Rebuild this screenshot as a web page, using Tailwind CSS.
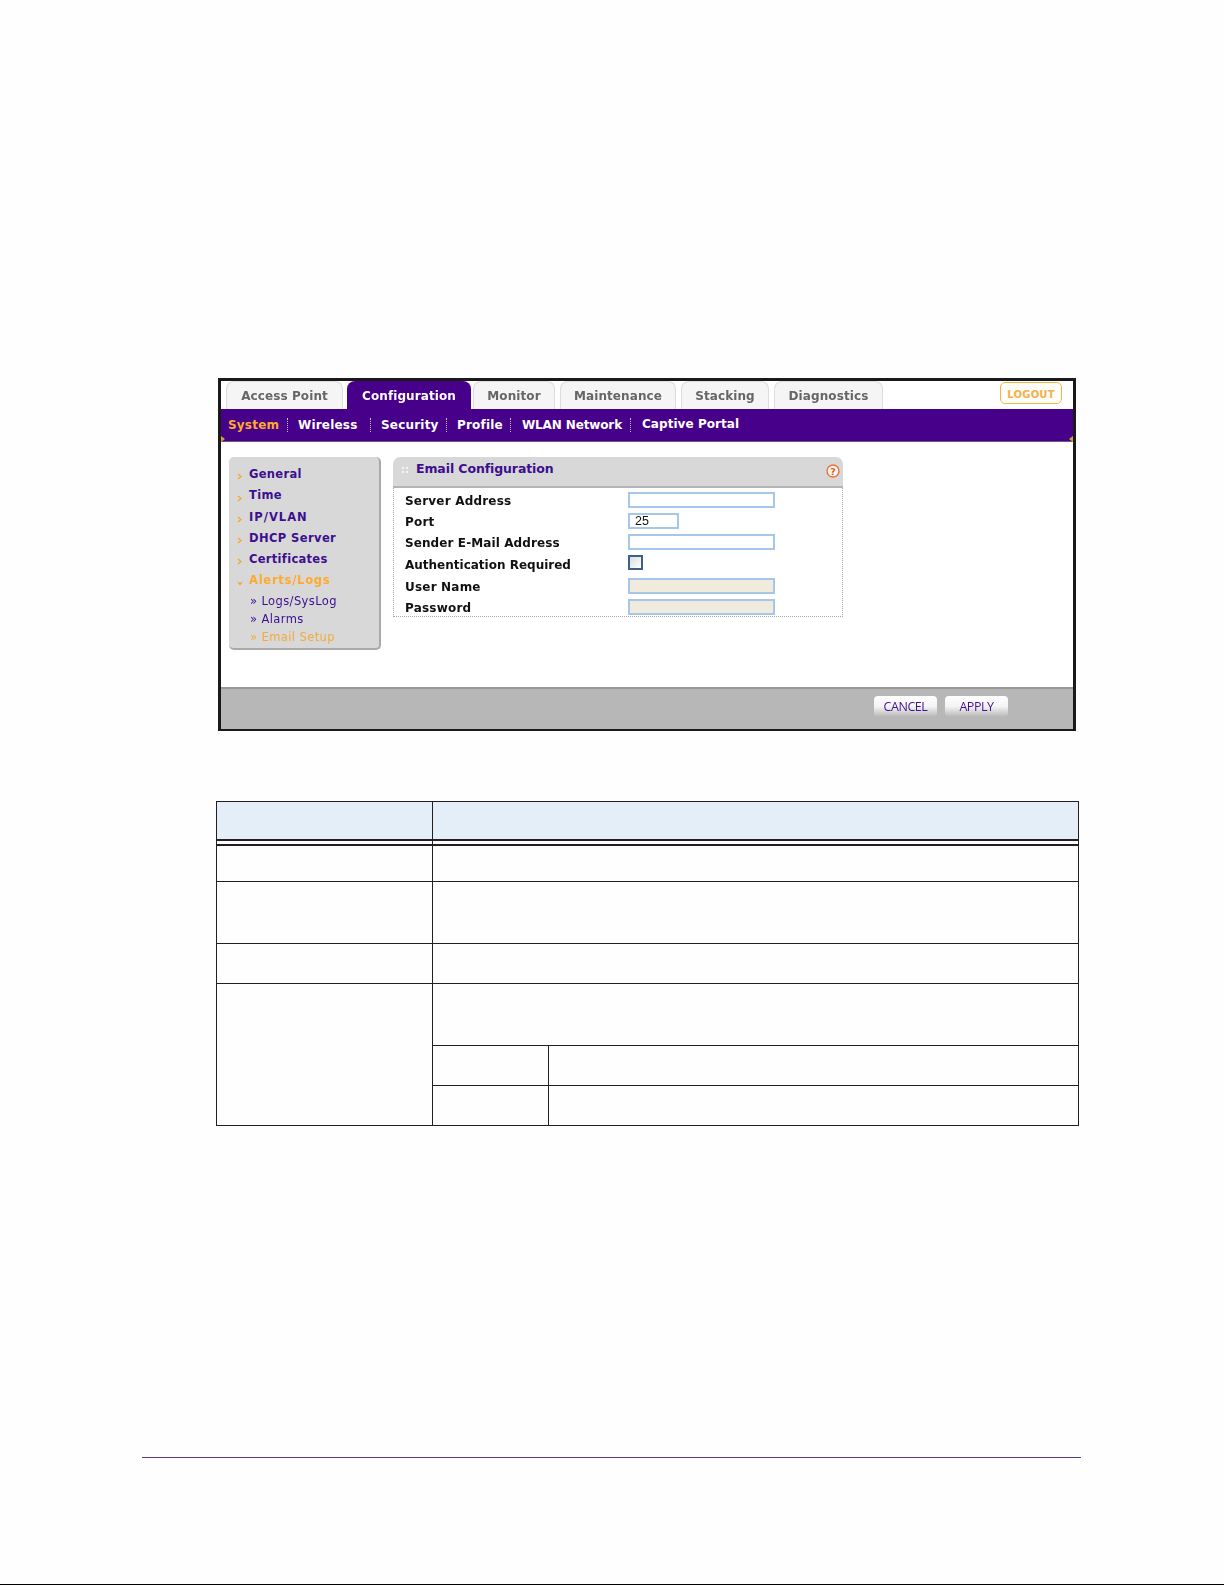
<!DOCTYPE html>
<html lang="en">
<head>
<meta charset="utf-8">
<title>Email Configuration</title>
<script src="https://cdn.jsdelivr.net/npm/@tailwindcss/browser@4"></script>
</head>
<body class="bg-[#fefefe] font-['DejaVu_Sans',sans-serif]">
<div class="h-[1585px] w-[1225px] overflow-hidden flex flex-col">
  <!-- Screenshot frame -->
  <div class="mt-[378px] ml-[218px] w-[858px] h-[353px] border-x-[3px] border-t-[3px] border-b-[2px] border-[#1a1a1a] bg-white shrink-0">
  <div class="h-full flex flex-col blur-[0.35px]">
    <div class="h-[28px] flex items-end pl-[5px] relative text-[12px] font-bold tracking-[0.1px] text-[#666]">
      <div class="w-[117px] h-[28px] pt-[1px] flex items-center justify-center rounded-t-[8px] border border-b-0 border-[#ddd] bg-[#f5f5f5]">Access Point</div>
      <div class="ml-[4px] w-[124px] h-[28px] pt-[2px] flex items-center justify-center rounded-t-[8px] bg-[#47008a] text-white">Configuration</div>
      <div class="ml-[2px] w-[82px] h-[28px] pt-[1px] flex items-center justify-center rounded-t-[8px] border border-b-0 border-[#ddd] bg-[#f5f5f5]">Monitor</div>
      <div class="ml-[5px] w-[116px] h-[28px] pt-[1px] flex items-center justify-center rounded-t-[8px] border border-b-0 border-[#ddd] bg-[#f5f5f5]">Maintenance</div>
      <div class="ml-[5px] w-[88px] h-[28px] pt-[1px] flex items-center justify-center rounded-t-[8px] border border-b-0 border-[#ddd] bg-[#f5f5f5]">Stacking</div>
      <div class="ml-[5px] w-[109px] h-[28px] pt-[1px] flex items-center justify-center rounded-t-[8px] border border-b-0 border-[#ddd] bg-[#f5f5f5]">Diagnostics</div>
      <div class="absolute left-[779px] top-[1px] w-[62px] h-[22px] pt-[2px] flex items-center justify-center rounded-[5px] border border-[#f5b547] bg-[#fffdf8] text-[10px] text-[#f2b04a] tracking-[0.2px]">LOGOUT</div>
    </div>
    <div class="h-[33px] bg-[#47008a] flex items-center pl-[7px] relative text-[12px] font-bold tracking-[0.2px] text-white border-b border-[#6b5a80]">
      <div class="w-[60px] h-[14px] flex items-center border-r border-dotted border-[#cbb8e0] text-[#ffa92e]">System</div>
      <div class="ml-[10px] w-[73px] h-[14px] flex items-center border-r border-dotted border-[#cbb8e0]">Wireless</div>
      <div class="ml-[10px] w-[66px] h-[14px] flex items-center border-r border-dotted border-[#cbb8e0]">Security</div>
      <div class="ml-[10px] w-[54px] h-[14px] flex items-center border-r border-dotted border-[#cbb8e0]">Profile</div>
      <div class="ml-[11px] w-[109px] h-[14px] flex items-center border-r border-dotted border-[#cbb8e0] tracking-[-0.13px]">WLAN Network</div>
      <div class="ml-[11px] mb-[2px] tracking-[0.05px]">Captive Portal</div>
      <div class="absolute left-0 bottom-[-1px] w-0 h-0 border-y-[3px] border-l-[4px] border-y-transparent border-l-[#d9a03a]"></div>
      <div class="absolute right-0 bottom-[-1px] w-0 h-0 border-y-[3px] border-r-[4px] border-y-transparent border-r-[#d9a03a]"></div>
    </div>
    <div class="h-[245px] flex items-start pl-[8px] pt-[15px]">
      <!-- Sidebar -->
      <div class="w-[152px] h-[193px] rounded-[5px] bg-[#d8d8d8] border-r-2 border-b-2 border-[#a9a9a9] pt-[7px] text-[11.5px] font-bold tracking-[0.3px] text-[#3d0f8f]">
        <div class="h-[21px] flex items-center"><svg class="ml-[8px] mt-[4px] w-[5px] h-[7px]" viewBox="0 0 5 7"><path d="M1 1l3 2.5-3 2.5" fill="none" stroke="#f0a830" stroke-width="1.3"/></svg><span class="ml-[7px]">General</span></div>
        <div class="h-[21px] mt-[0.5px] flex items-center"><svg class="ml-[8px] mt-[4px] w-[5px] h-[7px]" viewBox="0 0 5 7"><path d="M1 1l3 2.5-3 2.5" fill="none" stroke="#f0a830" stroke-width="1.3"/></svg><span class="ml-[7px]">Time</span></div>
        <div class="h-[21px] mt-[0.5px] flex items-center"><svg class="ml-[8px] mt-[4px] w-[5px] h-[7px]" viewBox="0 0 5 7"><path d="M1 1l3 2.5-3 2.5" fill="none" stroke="#f0a830" stroke-width="1.3"/></svg><span class="ml-[7px] tracking-[1px]">IP/VLAN</span></div>
        <div class="h-[21px] flex items-center"><svg class="ml-[8px] mt-[4px] w-[5px] h-[7px]" viewBox="0 0 5 7"><path d="M1 1l3 2.5-3 2.5" fill="none" stroke="#f0a830" stroke-width="1.3"/></svg><span class="ml-[7px] tracking-[0.4px]">DHCP Server</span></div>
        <div class="h-[21px] flex items-center"><svg class="ml-[8px] mt-[4px] w-[5px] h-[7px]" viewBox="0 0 5 7"><path d="M1 1l3 2.5-3 2.5" fill="none" stroke="#f0a830" stroke-width="1.3"/></svg><span class="ml-[7px]">Certificates</span></div>
        <div class="h-[21px] mt-[0.5px] flex items-center text-[#ffa92e]"><svg class="ml-[8px] mt-[4px] w-[6px] h-[5px]" viewBox="0 0 6 5"><path d="M1 1l2 2.5 2-2.5" fill="none" stroke="#f0a830" stroke-width="1.3"/></svg><span class="ml-[6px] tracking-[0.75px]">Alerts/Logs</span></div>
        <div class="font-normal text-[11.5px] tracking-[0.4px] pl-[21px] pt-[1px]">
          <div class="h-[18px] flex items-center">» Logs/SysLog</div>
          <div class="h-[18px] flex items-center">» Alarms</div>
          <div class="h-[18px] flex items-center text-[#f2ab3c]">» Email Setup</div>
        </div>
      </div>
      <!-- Panel -->
      <div class="ml-[12px] w-[450px] h-[160px]">
        <div class="h-[31px] rounded-t-[7px] bg-[#d8d8d8] border-b-2 border-[#b4b4b4] flex items-center pl-[9px] relative">
          <div class="grid grid-cols-2 gap-[2px] w-[6px] mb-[4px]">
            <span class="w-[2px] h-[2px] bg-[#f4f4f4]"></span><span class="w-[2px] h-[2px] bg-[#f4f4f4]"></span><span class="w-[2px] h-[2px] bg-[#f4f4f4]"></span><span class="w-[2px] h-[2px] bg-[#f4f4f4]"></span>
          </div>
          <span class="ml-[8px] mb-[5px] text-[12.5px] tracking-[-0.1px] font-bold text-[#3d0f8f]">Email Configuration</span>
          <svg class="absolute right-[3px] top-[7px] w-[14px] h-[14px]" viewBox="0 0 14 14"><circle cx="7" cy="7" r="6" fill="#fff6f0" stroke="#f0703a" stroke-width="1.4"/><text x="7" y="10.5" text-anchor="middle" font-size="9.5" font-weight="700" fill="#e0602a">?</text></svg>
        </div>
        <div class="h-[129px] border-x border-b border-dotted border-[#a8a8a8] pl-[11px] pt-[4px] text-[12px] leading-[16px] font-bold tracking-[0.2px] text-[#111]">
          <div class="h-[16px] grid grid-cols-[223px_1fr] grid-rows-[16px] items-center"><span class="pt-[2px]">Server Address</span><div class="w-[147px] h-[16px] border-2 border-[#a6c6ea] bg-white"></div></div>
          <div class="mt-[5px] h-[16px] grid grid-cols-[223px_1fr] grid-rows-[16px] items-center"><span class="pt-[2px]">Port</span><div class="w-[51px] h-[16px] border-2 border-[#a6c6ea] bg-white pl-[5px] flex items-center font-['Liberation_Sans',sans-serif] font-normal text-[12.5px] tracking-normal">25</div></div>
          <div class="mt-[5px] h-[16px] grid grid-cols-[223px_1fr] grid-rows-[16px] items-center"><span class="pt-[2px] tracking-[0.1px]">Sender E-Mail Address</span><div class="w-[147px] h-[16px] border-2 border-[#a6c6ea] bg-white"></div></div>
          <div class="mt-[5px] h-[15px] grid grid-cols-[223px_1fr] grid-rows-[15px] items-start"><span class="pt-[2px] tracking-normal">Authentication Required</span><div class="w-[15px] h-[15px] border-2 border-[#3f5f85] bg-linear-to-br from-[#d5dfdf] to-white"></div></div>
          <div class="mt-[8px] h-[16px] grid grid-cols-[223px_1fr] grid-rows-[16px] items-center"><span class="pt-[2px]">User Name</span><div class="w-[147px] h-[16px] border-2 border-[#a6c6ea] bg-[#efebdd]"></div></div>
          <div class="mt-[5px] h-[16px] grid grid-cols-[223px_1fr] grid-rows-[16px] items-center"><span class="pt-[2px]">Password</span><div class="w-[147px] h-[16px] border-2 border-[#a6c6ea] bg-[#efebdd]"></div></div>
        </div>
      </div>
    </div>
    <!-- Bottom bar -->
    <div class="h-[42px] border-t-2 border-[#989898] bg-[#b7b7b7] flex justify-end items-start pt-[7px] pr-[65px] font-['Open_Sans',sans-serif] font-medium text-[12.5px] tracking-[-0.45px] text-[#47108f]">
      <div class="w-[63px] h-[21px] pt-[1px] rounded-[4px] bg-linear-to-b from-white via-[#f4f4f4] to-[#b7b7b7] flex items-center justify-center">CANCEL</div>
      <div class="ml-[8px] w-[63px] h-[21px] pt-[1px] rounded-[4px] bg-linear-to-b from-white via-[#f4f4f4] to-[#b7b7b7] flex items-center justify-center">APPLY</div>
    </div>
  </div>
  </div>
  <!-- Table -->
  <table class="mt-[70px] ml-[216px] w-[862px] table-fixed border-collapse shrink-0">
    <colgroup><col class="w-[216px]"><col class="w-[116px]"><col class="w-[530px]"></colgroup>
    <tbody>
      <tr class="h-[38px] bg-[#e3eef9]"><th class="border border-b-2 border-[#231f20] p-0"></th><th colspan="2" class="border border-b-2 border-[#231f20] p-0"></th></tr>
      <tr class="h-[5px]"><td class="border-x border-[#231f20] p-0"></td><td colspan="2" class="border-x border-[#231f20] p-0"></td></tr>
      <tr class="h-[37px]"><td class="border border-t-2 border-[#231f20] p-0"></td><td colspan="2" class="border border-t-2 border-[#231f20] p-0"></td></tr>
      <tr class="h-[62px]"><td class="border border-[#231f20] p-0"></td><td colspan="2" class="border border-[#231f20] p-0"></td></tr>
      <tr class="h-[40px]"><td class="border border-[#231f20] p-0"></td><td colspan="2" class="border border-[#231f20] p-0"></td></tr>
      <tr class="h-[62px]"><td rowspan="3" class="border border-[#231f20] p-0"></td><td colspan="2" class="border border-[#231f20] p-0"></td></tr>
      <tr class="h-[40px]"><td class="border border-[#231f20] p-0"></td><td class="border border-[#231f20] p-0"></td></tr>
      <tr class="h-[40px]"><td class="border border-[#231f20] p-0"></td><td class="border border-[#231f20] p-0"></td></tr>
    </tbody>
  </table>
  <!-- Footer rules -->
  <div class="mt-auto ml-[142px] w-[939px] h-px bg-[#5b3a8c] shrink-0 mb-[126px]"></div>
  <div class="h-px w-[1224px] bg-black shrink-0"></div>
</div>
</body>
</html>
